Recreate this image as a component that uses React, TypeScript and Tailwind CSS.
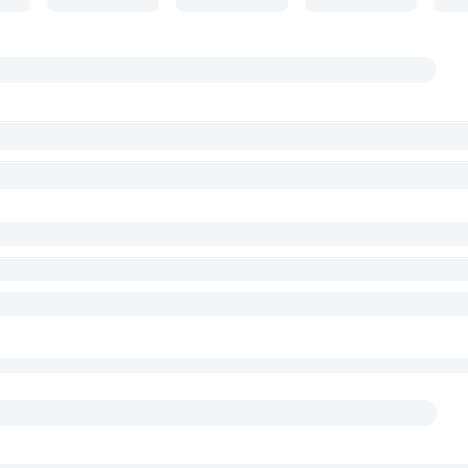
import React from "react";

function Row({ h, line = false, className = "" }: { h: string; line?: boolean; className?: string }) {
  return (
    <div className={`w-full ${className}`}>
      {line && <div className="h-px w-full bg-[#f0f1f3]" />}
      {line && <div className="h-px w-full bg-white" />}
      <div className={`${h} w-full bg-[#f4f5f7]`} />
    </div>
  );
}

export default function App() {
  return (
    <div className="w-[468px] h-[468px] overflow-hidden bg-white flex flex-col">
      <div className="flex gap-[17px] -ml-[82px] -mt-4 shrink-0">
        {[0, 1, 2, 3, 4].map((i) => (
          <div key={i} className="w-[112px] h-7 shrink-0 rounded-lg bg-[#f4f5f7]" />
        ))}
      </div>
      <div className="mt-[45px] h-[26px] w-[436px] shrink-0 rounded-r-xl bg-[#f4f5f7]" />
      <Row h="h-[27px]" line className="mt-[38px] shrink-0" />
      <Row h="h-[26px]" line className="mt-[11px] shrink-0" />
      <Row h="h-[24px]" className="mt-[33px] shrink-0" />
      <Row h="h-[22px]" line className="mt-[11px] shrink-0" />
      <Row h="h-[24px]" className="mt-[11px] shrink-0" />
      <Row h="h-[15px]" className="mt-[42px] shrink-0" />
      <div className="mt-[27px] h-[26px] w-[437px] shrink-0 rounded-r-xl bg-[#f4f5f7]" />
      <div className="mt-[38px] h-[10px] w-full shrink-0 bg-[#f4f5f7]" />
    </div>
  );
}
